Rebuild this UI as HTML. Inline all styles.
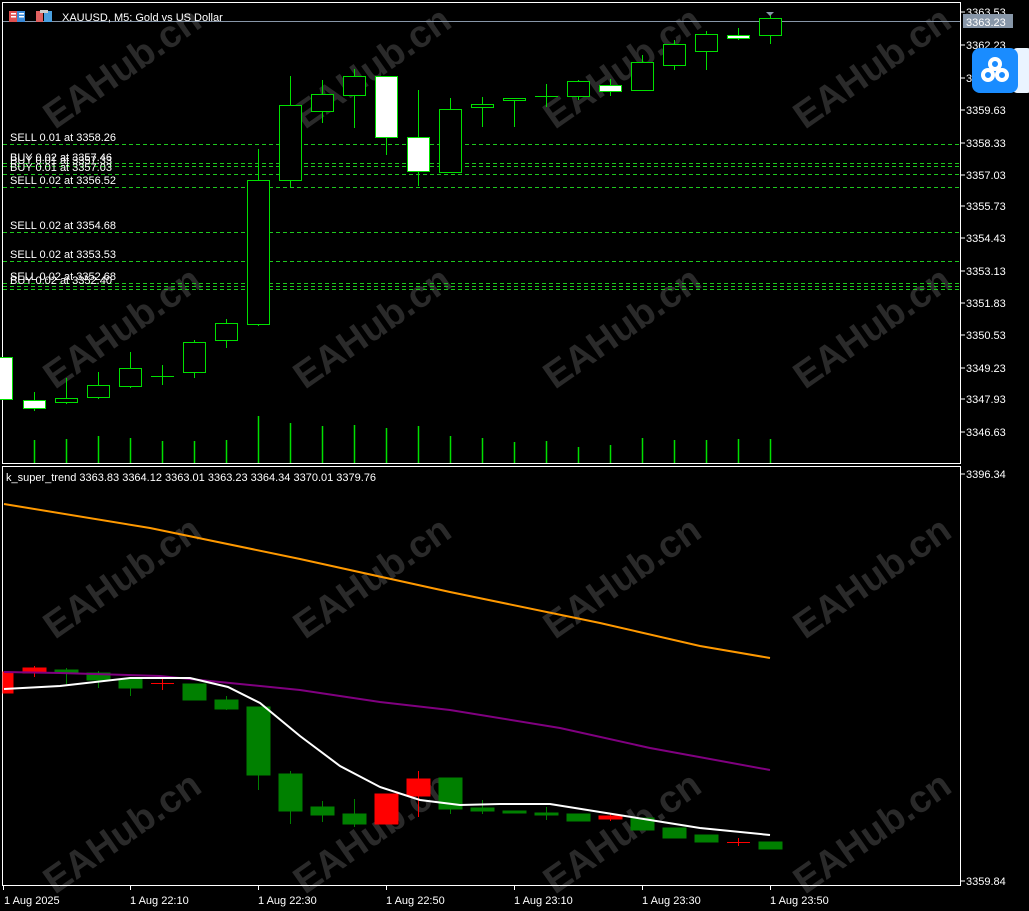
<!DOCTYPE html>
<html><head><meta charset="utf-8"><style>
html,body{margin:0;padding:0;background:#000;overflow:hidden}
svg{display:block}
text{font-family:"Liberation Sans",sans-serif;font-size:11px;fill:#fff}
.wm{font-size:38px;font-weight:bold;fill:#2a2a2a}
</style></head><body>
<svg width="1029" height="911" viewBox="0 0 1029 911" xmlns="http://www.w3.org/2000/svg">
<rect width="1029" height="911" fill="#000"/>
<!-- watermarks -->
<g>
<text class="wm" transform="translate(55,130) rotate(-35)">EAHub.cn</text>
<text class="wm" transform="translate(305,130) rotate(-35)">EAHub.cn</text>
<text class="wm" transform="translate(555,130) rotate(-35)">EAHub.cn</text>
<text class="wm" transform="translate(805,130) rotate(-35)">EAHub.cn</text>
<text class="wm" transform="translate(55,390) rotate(-35)">EAHub.cn</text>
<text class="wm" transform="translate(305,390) rotate(-35)">EAHub.cn</text>
<text class="wm" transform="translate(555,390) rotate(-35)">EAHub.cn</text>
<text class="wm" transform="translate(805,390) rotate(-35)">EAHub.cn</text>
<text class="wm" transform="translate(55,640) rotate(-35)">EAHub.cn</text>
<text class="wm" transform="translate(305,640) rotate(-35)">EAHub.cn</text>
<text class="wm" transform="translate(555,640) rotate(-35)">EAHub.cn</text>
<text class="wm" transform="translate(805,640) rotate(-35)">EAHub.cn</text>
<text class="wm" transform="translate(55,895) rotate(-35)">EAHub.cn</text>
<text class="wm" transform="translate(305,895) rotate(-35)">EAHub.cn</text>
<text class="wm" transform="translate(555,895) rotate(-35)">EAHub.cn</text>
<text class="wm" transform="translate(805,895) rotate(-35)">EAHub.cn</text>
</g>
<!-- frames -->
<rect x="2.5" y="2.5" width="958" height="461" fill="none" stroke="#fff"/>
<rect x="2.5" y="466.5" width="958" height="419" fill="none" stroke="#fff"/>
<line x1="3" y1="21.5" x2="960" y2="21.5" stroke="#8796a8"/>
<!-- header -->
<rect x="9" y="11" width="16" height="11" fill="#e05050"/><rect x="17" y="11" width="8" height="11" fill="#3a8ad8"/>
<rect x="11" y="13" width="5" height="1.5" fill="#fff"/><rect x="11" y="16" width="5" height="1.5" fill="#fff"/><rect x="19" y="13" width="5" height="1.5" fill="#fff"/><rect x="19" y="16" width="5" height="1.5" fill="#fff"/>
<rect x="36" y="11" width="7" height="11" fill="#e06060"/><rect x="44" y="11" width="8" height="11" fill="#4aa0e0"/><rect x="40" y="10" width="8" height="3" fill="#ccc"/>
<text x="62" y="21">XAUUSD, M5:  Gold vs US Dollar</text>
<!-- dashed order lines -->
<g stroke="#1ec81e" stroke-dasharray="4,3" stroke-width="1">
<line x1="3" y1="144.5" x2="960" y2="144.5"/>
<line x1="3" y1="163.5" x2="960" y2="163.5"/>
<line x1="3" y1="166.5" x2="960" y2="166.5"/>
<line x1="3" y1="174.5" x2="960" y2="174.5"/>
<line x1="3" y1="187.5" x2="960" y2="187.5"/>
<line x1="3" y1="232.5" x2="960" y2="232.5"/>
<line x1="3" y1="261.5" x2="960" y2="261.5"/>
<line x1="3" y1="283.5" x2="960" y2="283.5"/>
<line x1="3" y1="286.5" x2="960" y2="286.5"/>
<line x1="3" y1="289.5" x2="960" y2="289.5"/>
</g>
<text x="10" y="141">SELL 0.01 at 3358.26</text>
<text x="10" y="161">BUY 0.02 at 3357.46</text>
<text x="10" y="164">BUY 0.01 at 3357.33</text>
<text x="10" y="171">BUY 0.01 at 3357.03</text>
<text x="10" y="184">SELL 0.02 at 3356.52</text>
<text x="10" y="229">SELL 0.02 at 3354.68</text>
<text x="10" y="258">SELL 0.02 at 3353.53</text>
<text x="10" y="280">SELL 0.02 at 3352.68</text>
<text x="10" y="284">BUY 0.02 at 3352.40</text>
<!-- top candles -->
<g stroke="#00e000" stroke-width="1">
<line x1="34.5" y1="392" x2="34.5" y2="411"/><rect x="23.5" y="400.5" width="22" height="8" fill="#fff"/>
<line x1="66.5" y1="378" x2="66.5" y2="404"/><rect x="55.5" y="398.5" width="22" height="4" fill="#000"/>
<line x1="98.5" y1="372" x2="98.5" y2="399"/><rect x="87.5" y="385.5" width="22" height="12" fill="#000"/>
<line x1="130.5" y1="352" x2="130.5" y2="388"/><rect x="119.5" y="368.5" width="22" height="18" fill="#000"/>
<line x1="162.5" y1="365" x2="162.5" y2="385"/><line x1="151" y1="376.5" x2="174" y2="376.5"/>
<line x1="194.5" y1="340" x2="194.5" y2="378"/><rect x="183.5" y="342.5" width="22" height="30" fill="#000"/>
<line x1="226.5" y1="319" x2="226.5" y2="348"/><rect x="215.5" y="323.5" width="22" height="17" fill="#000"/>
<line x1="258.5" y1="149" x2="258.5" y2="326"/><rect x="247.5" y="180.5" width="22" height="144" fill="#000"/>
<line x1="290.5" y1="76" x2="290.5" y2="187"/><rect x="279.5" y="105.5" width="22" height="75" fill="#000"/>
<line x1="322.5" y1="80" x2="322.5" y2="123"/><rect x="311.5" y="94.5" width="22" height="17" fill="#000"/>
<line x1="354.5" y1="69" x2="354.5" y2="128"/><rect x="343.5" y="76.5" width="22" height="19" fill="#000"/>
<line x1="386.5" y1="76" x2="386.5" y2="155"/><rect x="375.5" y="76.5" width="22" height="61" fill="#fff"/>
<line x1="418.5" y1="90" x2="418.5" y2="186"/><rect x="407.5" y="137.5" width="22" height="34" fill="#fff"/>
<line x1="450.5" y1="98" x2="450.5" y2="173"/><rect x="439.5" y="109.5" width="22" height="63" fill="#000"/>
<line x1="482.5" y1="97" x2="482.5" y2="127"/><rect x="471.5" y="104.5" width="22" height="3" fill="#000"/>
<line x1="514.5" y1="98" x2="514.5" y2="127"/><rect x="503.5" y="98.5" width="22" height="2" fill="#000"/>
<line x1="546.5" y1="84" x2="546.5" y2="107"/><line x1="535" y1="96.5" x2="558" y2="96.5"/>
<line x1="578.5" y1="80" x2="578.5" y2="100"/><rect x="567.5" y="81.5" width="22" height="15" fill="#000"/>
<line x1="610.5" y1="79" x2="610.5" y2="96"/><rect x="599.5" y="85.5" width="22" height="6" fill="#fff"/>
<line x1="642.5" y1="55" x2="642.5" y2="91"/><rect x="631.5" y="62.5" width="22" height="28" fill="#000"/>
<line x1="674.5" y1="40" x2="674.5" y2="70"/><rect x="663.5" y="44.5" width="22" height="21" fill="#000"/>
<line x1="706.5" y1="31" x2="706.5" y2="70"/><rect x="695.5" y="34.5" width="22" height="17" fill="#000"/>
<line x1="738.5" y1="28" x2="738.5" y2="40"/><rect x="727.5" y="35.5" width="22" height="3" fill="#fff"/>
<line x1="770.5" y1="14" x2="770.5" y2="44"/><rect x="759.5" y="18.5" width="22" height="17" fill="#000"/>
<rect x="-8.5" y="357.5" width="21" height="42" fill="#fff"/>
</g>
<polygon points="766,12 774,12 770,16" fill="#8796a8"/>
<!-- volumes -->
<g stroke="#00e000" stroke-width="1.5">
<line x1="34.5" y1="440" x2="34.5" y2="463"/><line x1="66.5" y1="439" x2="66.5" y2="463"/><line x1="98.5" y1="436" x2="98.5" y2="463"/><line x1="130.5" y1="438" x2="130.5" y2="463"/><line x1="162.5" y1="441" x2="162.5" y2="463"/><line x1="194.5" y1="441" x2="194.5" y2="463"/><line x1="226.5" y1="440" x2="226.5" y2="463"/><line x1="258.5" y1="416" x2="258.5" y2="463"/><line x1="290.5" y1="423" x2="290.5" y2="463"/><line x1="322.5" y1="426" x2="322.5" y2="463"/><line x1="354.5" y1="425" x2="354.5" y2="463"/><line x1="386.5" y1="428" x2="386.5" y2="463"/><line x1="418.5" y1="426" x2="418.5" y2="463"/><line x1="450.5" y1="436" x2="450.5" y2="463"/><line x1="482.5" y1="438" x2="482.5" y2="463"/><line x1="514.5" y1="442" x2="514.5" y2="463"/><line x1="546.5" y1="441" x2="546.5" y2="463"/><line x1="578.5" y1="447" x2="578.5" y2="463"/><line x1="610.5" y1="445" x2="610.5" y2="463"/><line x1="642.5" y1="438" x2="642.5" y2="463"/><line x1="674.5" y1="440" x2="674.5" y2="463"/><line x1="706.5" y1="440" x2="706.5" y2="463"/><line x1="738.5" y1="439" x2="738.5" y2="463"/><line x1="770.5" y1="439" x2="770.5" y2="463"/>
</g>
<!-- right axis top -->
<g stroke="#fff"><line x1="961" y1="12" x2="965" y2="12"/><line x1="961" y1="45" x2="965" y2="45"/><line x1="961" y1="78" x2="965" y2="78"/><line x1="961" y1="110" x2="965" y2="110"/><line x1="961" y1="143" x2="965" y2="143"/><line x1="961" y1="175" x2="965" y2="175"/><line x1="961" y1="206" x2="965" y2="206"/><line x1="961" y1="238" x2="965" y2="238"/><line x1="961" y1="271" x2="965" y2="271"/><line x1="961" y1="303" x2="965" y2="303"/><line x1="961" y1="335" x2="965" y2="335"/><line x1="961" y1="368" x2="965" y2="368"/><line x1="961" y1="399" x2="965" y2="399"/><line x1="961" y1="432" x2="965" y2="432"/><line x1="961" y1="474" x2="965" y2="474"/><line x1="961" y1="881" x2="965" y2="881"/></g>
<text x="966" y="16">3363.53</text>
<rect x="963" y="14" width="50" height="14" fill="#8796a8"/>
<text x="966" y="26">3363.23</text>
<text x="966" y="49">3362.23</text>
<text x="966" y="82">3360.93</text>
<text x="966" y="114">3359.63</text>
<text x="966" y="147">3358.33</text>
<text x="966" y="179">3357.03</text>
<text x="966" y="210">3355.73</text>
<text x="966" y="242">3354.43</text>
<text x="966" y="275">3353.13</text>
<text x="966" y="307">3351.83</text>
<text x="966" y="339">3350.53</text>
<text x="966" y="372">3349.23</text>
<text x="966" y="403">3347.93</text>
<text x="966" y="436">3346.63</text>
<text x="966" y="478">3396.34</text>
<text x="966" y="885">3359.84</text>
<!-- blue icon -->
<rect x="1012" y="48" width="20" height="45" rx="5" fill="#eaf4ff"/>
<rect x="972" y="48" width="46" height="45" rx="8" fill="#1a8cff"/>
<g fill="none" stroke="#fff" stroke-width="4"><circle cx="995" cy="64" r="5"/><circle cx="988" cy="75" r="5"/><circle cx="1002" cy="75" r="5"/></g>
<!-- bottom panel -->
<text x="6" y="481">k_super_trend 3363.83 3364.12 3363.01 3363.23 3364.34 3370.01 3379.76</text>
<polyline fill="none" stroke="#ff9900" stroke-width="2" points="4,504 150,528 300,559 450,592 600,623 700,646 770,658"/>
<!-- bottom candles -->
<g stroke-width="1">
<g fill="#ff0000" stroke="#ff0000">
<rect x="3" y="672" width="10" height="21"/>
<line x1="34.5" y1="666" x2="34.5" y2="677"/><rect x="23" y="668" width="23" height="5"/>
<line x1="151" y1="683.5" x2="174" y2="683.5"/><line x1="162.5" y1="677" x2="162.5" y2="690"/>
<rect x="375" y="794" width="23" height="30"/>
<line x1="418.5" y1="771" x2="418.5" y2="817"/><rect x="407" y="779" width="23" height="17"/>
<rect x="599" y="816" width="23" height="3"/><line x1="610.5" y1="814" x2="610.5" y2="821"/>
<line x1="727" y1="842.5" x2="750" y2="842.5"/><line x1="738.5" y1="838" x2="738.5" y2="846"/>
</g>
<g fill="#008000" stroke="#008000">
<rect x="55" y="670" width="23" height="3"/><line x1="66.5" y1="668" x2="66.5" y2="684"/>
<rect x="87" y="673" width="23" height="7"/><line x1="98.5" y1="671" x2="98.5" y2="688"/>
<rect x="119" y="679" width="23" height="9"/><line x1="130.5" y1="679" x2="130.5" y2="696"/>
<rect x="183" y="684" width="23" height="16"/>
<rect x="215" y="700" width="23" height="9"/><line x1="226.5" y1="696" x2="226.5" y2="710"/>
<rect x="247" y="707" width="23" height="68"/><line x1="258.5" y1="775" x2="258.5" y2="790"/>
<rect x="279" y="774" width="23" height="37"/><line x1="290.5" y1="771" x2="290.5" y2="824"/>
<rect x="311" y="807" width="23" height="8"/><line x1="322.5" y1="801" x2="322.5" y2="822"/>
<rect x="343" y="814" width="23" height="10"/><line x1="354.5" y1="799" x2="354.5" y2="827"/>
<rect x="439" y="778" width="23" height="31"/><line x1="450.5" y1="809" x2="450.5" y2="814"/>
<rect x="471" y="808" width="23" height="3"/><line x1="482.5" y1="800" x2="482.5" y2="814"/>
<rect x="503" y="811" width="23" height="2"/>
<rect x="535" y="813" width="23" height="2"/><line x1="546.5" y1="807" x2="546.5" y2="820"/>
<rect x="567" y="814" width="23" height="7"/>
<rect x="631" y="818" width="23" height="12"/>
<rect x="663" y="828" width="23" height="10"/>
<rect x="695" y="835" width="23" height="7"/>
<rect x="759" y="842" width="23" height="7"/>
</g>
</g>
<polyline fill="none" stroke="#800080" stroke-width="2" points="4,672 60,673 160,676 230,683 300,690 380,702 450,710 560,728 650,748 770,770"/>
<polyline fill="none" stroke="#fff" stroke-width="2" points="4,689 60,686 130,678 190,678 228,687 260,703 300,736 340,766 380,787 420,800 460,805 500,804 550,804 600,812 650,820 700,828 770,835"/>
<!-- time axis -->
<g stroke="#fff"><line x1="3.5" y1="886" x2="3.5" y2="890"/><line x1="130.5" y1="886" x2="130.5" y2="890"/><line x1="258.5" y1="886" x2="258.5" y2="890"/><line x1="386.5" y1="886" x2="386.5" y2="890"/><line x1="514.5" y1="886" x2="514.5" y2="890"/><line x1="642.5" y1="886" x2="642.5" y2="890"/><line x1="770.5" y1="886" x2="770.5" y2="890"/></g>
<text x="4" y="904">1 Aug 2025</text>
<text x="130" y="904">1 Aug 22:10</text>
<text x="258" y="904">1 Aug 22:30</text>
<text x="386" y="904">1 Aug 22:50</text>
<text x="514" y="904">1 Aug 23:10</text>
<text x="642" y="904">1 Aug 23:30</text>
<text x="770" y="904">1 Aug 23:50</text>
</svg>
</body></html>
